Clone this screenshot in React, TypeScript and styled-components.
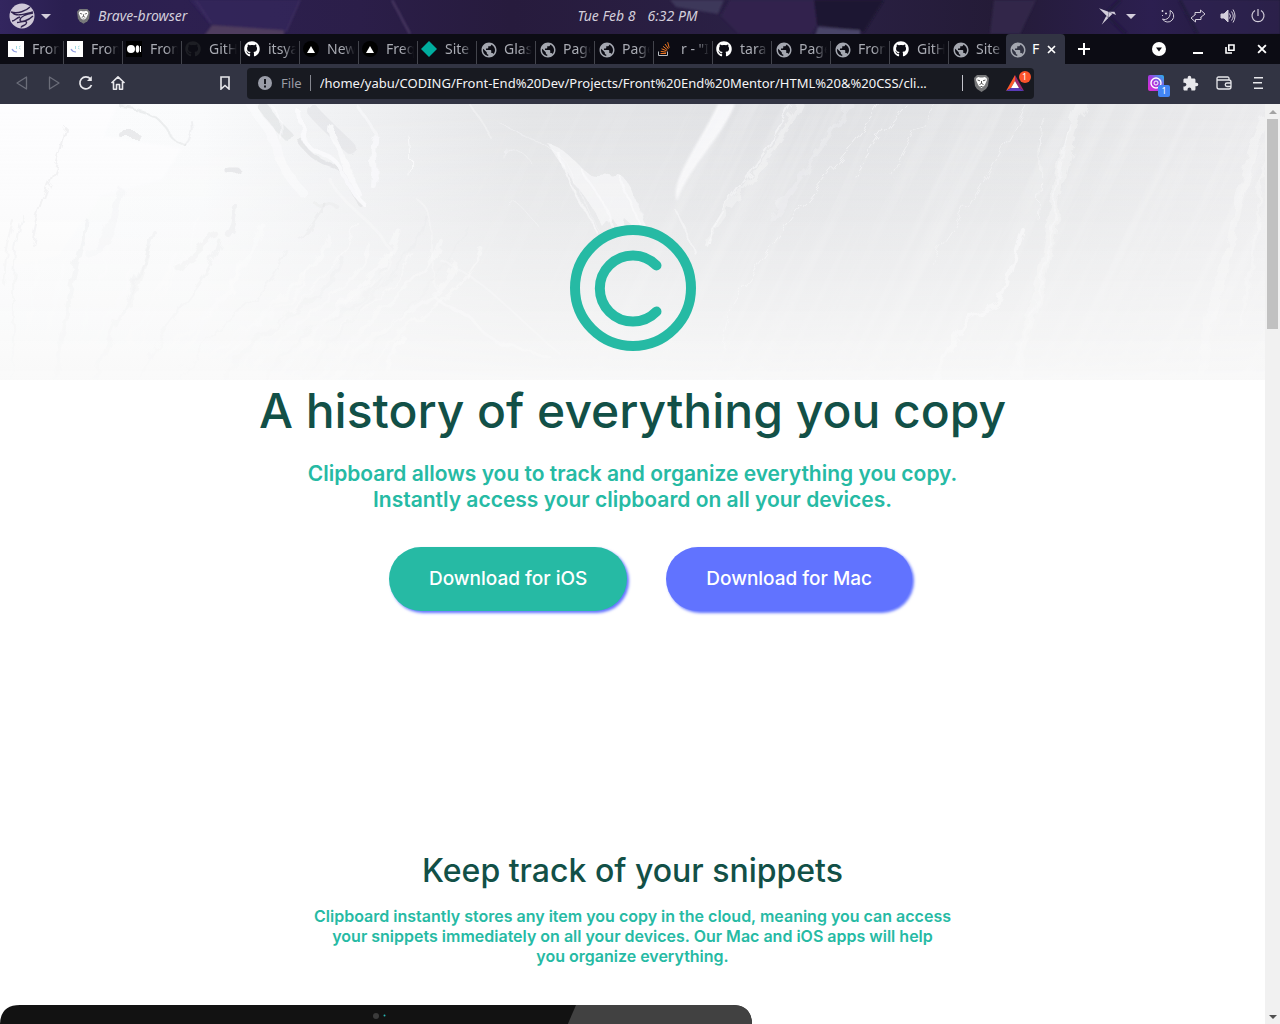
import React from "react";
import styled, { createGlobalStyle, css } from "styled-components";
import { FaGithub } from "react-icons/fa";
import { SiSnapcraft } from "react-icons/si";
import { MdPublic, MdExtension } from "react-icons/md";

const color = {
  panel: "#261d42",
  strip: "#0c0c14",
  toolbar: "#323443",
  field: "#181a21",
  tabText: "#a9abb3",
  light: "#e8e8ec",
  teal: "#26baa4",
  darkTeal: "#125047",
  blue: "#6173ff",
};

const GlobalStyle = createGlobalStyle`
  * { box-sizing: border-box; }
  body { margin: 0; background: #fff; }
  button, input { font: inherit; color: inherit; border: 0; background: none; padding: 0; margin: 0; }
  h1, h2, p { margin: 0; }
  svg { display: block; flex: none; }
`;

const Screen = styled.div`
  display: flex;
  flex-direction: column;
  height: 100vh;
  overflow: hidden;
  font-family: "Noto Sans", sans-serif;
  font-size: 14px;
`;

/* ---------- Desktop panel ---------- */

const Panel = styled.header`
  position: relative;
  display: grid;
  grid-template-columns: 1fr auto 1fr;
  align-items: center;
  flex: none;
  height: 34px;
  padding: 0 14px 2px 9px;
  background: ${color.panel};
  color: #d3cedb;
  font-style: italic;
  line-height: 20px;
`;

const PanelArt = styled.svg`
  position: absolute;
  inset: 0;
  width: 100%;
  height: 100%;
`;

const PanelGroup = styled.div<{ $end?: boolean }>`
  position: relative;
  display: flex;
  align-items: center;
  justify-content: ${(p) => (p.$end ? "flex-end" : "flex-start")};
  gap: ${(p) => (p.$end ? "14px" : "6px")};
`;

const PanelButton = styled.button`
  display: flex;
  align-items: center;
  gap: 6px;
  font-style: italic;
`;

const AppButton = styled(PanelButton)`
  margin-left: 20px;
  gap: 8px;
`;

const TrayMenu = styled(PanelButton)`
  gap: 10px;
  margin-right: 10px;
`;

const Clock = styled.time`
  position: relative;
  display: flex;
  gap: 12px;
`;

/* ---------- Tab strip ---------- */

const TabStrip = styled.nav`
  display: flex;
  flex: none;
  height: 30px;
  padding-left: 5px;
  background: ${color.strip};
  color: ${color.tabText};
`;

const Tab = styled.button<{ $active?: boolean }>`
  position: relative;
  display: flex;
  align-items: center;
  flex: 0 0 59px;
  gap: 8px;
  padding-left: 3px;
  ${(p) =>
    p.$active
      ? css`
          gap: 7px;
          margin-left: -2px;
          border-radius: 4px 4px 0 0;
          background: ${color.toolbar};
          color: #fff;
        `
      : css`
          &::after {
            content: "";
            position: absolute;
            right: 0;
            bottom: 0;
            width: 1px;
            height: 23px;
            background: #43444c;
          }
        `}
`;

const TabTitle = styled.span<{ $fade?: boolean }>`
  width: ${(p) => (p.$fade ? "28px" : "8px")};
  overflow: hidden;
  text-align: left;
  white-space: pre;
  line-height: 20px;
  ${(p) => p.$fade && "mask-image: linear-gradient(90deg, #000 56%, transparent 100%);"}
`;

const Favicon = styled.span<{ $bg?: string; $round?: boolean }>`
  display: grid;
  place-items: center;
  flex: none;
  width: 16px;
  height: 16px;
  border-radius: ${(p) => (p.$round ? "50%" : "0")};
  background: ${(p) => p.$bg || "transparent"};
`;

const WindowButton = styled.button<{ $width?: number }>`
  display: grid;
  place-items: center;
  width: ${(p) => p.$width || 32}px;
  color: #fff;
`;

const WindowControls = styled.div`
  display: flex;
  margin-left: auto;
  padding-right: 2px;
`;

/* ---------- Toolbar ---------- */

const Toolbar = styled.div`
  display: flex;
  align-items: center;
  flex: none;
  height: 40px;
  padding: 0 5px 2px 6px;
  background: ${color.toolbar};
  color: ${color.light};
`;

const ToolButton = styled.button<{ $dim?: boolean; $wide?: boolean }>`
  position: relative;
  display: grid;
  place-items: center;
  width: ${(p) => (p.$wide ? 34 : 32)}px;
  height: 32px;
  color: ${(p) => (p.$dim ? "#6b6d79" : "inherit")};
`;

const Spacer = styled.div<{ $grow: number }>`
  flex: ${(p) => p.$grow} 1 0;
`;

const AddressBar = styled.div`
  display: flex;
  align-items: center;
  flex: 786 1 0;
  height: 31px;
  margin-left: 6px;
  padding: 0 2px 0 10px;
  border-radius: 4px;
  background: ${color.field};
  font-size: 13px;
`;

const Scheme = styled.label`
  margin-left: 8px;
  padding-right: 8px;
  border-right: 1px solid #85878f;
  color: #9a9ca5;
  line-height: 16px;
`;

const Address = styled.input`
  flex: 1;
  min-width: 0;
  height: 20px;
  margin-left: 9px;
  color: #f4f4f6;
  outline: none;
`;

const Divider = styled.span`
  width: 1px;
  height: 16px;
  margin: 0 11px 0 8px;
  background: #c4c5cc;
`;

const RewardsButton = styled.button`
  position: relative;
  margin-left: 16px;
  padding-right: 8px;
`;

const Badge = styled.span<{ $square?: boolean }>`
  position: absolute;
  display: grid;
  place-items: center;
  width: 12px;
  height: 12px;
  font-size: 9px;
  line-height: 12px;
  color: #fff;
  ${(p) =>
    p.$square
      ? "right: 3px; bottom: 2px; border-radius: 2px; background: #4285f4;"
      : "right: 1px; top: -4px; border-radius: 50%; background: #fb542b;"}
`;

/* ---------- Web page ---------- */

const Viewport = styled.div`
  display: flex;
  flex: 1;
  min-height: 0;
  background: #fff;
`;

const Page = styled.main`
  flex: 1;
  min-width: 0;
  overflow: hidden;
  font-family: Inter, sans-serif;
  font-weight: 600;
  text-align: center;
`;

const Hero = styled.div`
  position: relative;
  display: flex;
  justify-content: center;
  padding: 121px 0 29px;
  background: #f8f8f8;
`;

const HeroArt = styled.svg`
  position: absolute;
  inset: 0;
  width: 100%;
  height: 100%;
`;

const Logo = styled.svg`
  position: relative;
`;

const Intro = styled.section`
  padding: 0 16px;
`;

const Title = styled.h1`
  color: ${color.darkTeal};
  font-size: 48px;
  font-weight: 500;
  line-height: 62px;
`;

const Lead = styled.p`
  margin-top: 19px;
  color: ${color.teal};
  font-size: 21px;
  line-height: 26px;
`;

const Actions = styled.div`
  display: flex;
  justify-content: center;
  gap: 39px;
  margin-top: 34px;
  padding-left: 36px;
`;

const Download = styled.a<{ $fill: string }>`
  padding: 0 40px;
  border-radius: 32px;
  background: ${(p) => p.$fill};
  box-shadow: 2px 2px 3px ${color.blue};
  color: #fff;
  font-size: 19px;
  font-weight: 500;
  line-height: 64px;
  text-decoration: none;
`;

const Snippets = styled.section`
  margin-top: 240px;
`;

const Subtitle = styled.h2`
  color: ${color.darkTeal};
  font-size: 32px;
  font-weight: 500;
  line-height: 40px;
`;

const Copy = styled.p`
  margin-top: 15px;
  color: ${color.teal};
  font-size: 16px;
  line-height: 20px;
`;

const Computer = styled.svg`
  margin-top: 39px;
`;

const Scrollbar = styled.div`
  display: flex;
  flex-direction: column;
  align-items: center;
  flex: 0 0 15px;
  background: #f1f1f1;
`;

const ScrollArrow = styled.span<{ $down?: boolean }>`
  width: 0;
  margin: ${(p) => (p.$down ? "auto 0 5px" : "6px 0 5px")};
  border: 4px solid transparent;
  ${(p) =>
    p.$down
      ? "border-top-color: #505050; border-bottom: 0;"
      : "border-bottom-color: #a3a3a3; border-top: 0;"}
`;

const ScrollThumb = styled.span`
  width: 11px;
  height: 210px;
  background: #c1c1c1;
`;

/* ---------- Small drawings ---------- */

const Caret = () => (
  <svg width="10" height="5" viewBox="0 0 10 5" fill="currentColor">
    <path d="M0 0h10L5 5z" />
  </svg>
);

const ZorinMark = () => (
  <svg width="26" height="26" viewBox="0 0 26 26">
    <circle cx="13" cy="13" r="12.500" fill="#cfc9d8" />
    <path
      d="M2 9C9 11 17 8 21 4M3.500 9.500C7 14 16 11 24 9M24 10C17 11 11 14 11 17s8 1 13-4M8 19.500C13 19 18 17 17.500 20S13 22 12 24.500M3 18c3 0 4-3 8-4"
      fill="none"
      stroke="#30234f"
      strokeWidth="1.400"
    />
  </svg>
);

const BraveLion = ({ size = 17 }: { size?: number }) => (
  <svg width={size - 2} height={size + 1} viewBox="0 0 15 18">
    <path d="M3 1h9l3 3-1 8-2 3-4.500 3L3 15l-2-3-1-8z" fill="#77787a" />
    <path
      d="M2.500 4l2-1 1.500.5h3l1.500-.5 2 1 .5 2-1.500 3.500-1 2L7.500 14 4.500 11.500l-1-2L2 6z"
      fill="#fff"
    />
    <path d="M3.500 6l2.500.8M11.500 6L9 6.800M7.500 7v2.500M5.500 10.500l2-1 2 1M6.500 12.500h2" stroke="#555" fill="none" />
  </svg>
);

const Globe = () => (
  <Favicon>
    <MdPublic size={18} color="#a4a7b0" />
  </Favicon>
);

const MentorIcon = () => (
  <Favicon $bg="#fff">
    <svg width="16" height="16" viewBox="0 0 16 16" fill="none">
      <path d="M4 8c1 2 2.500 3 5 3" stroke="#8e9be0" strokeWidth="1.200" />
      <path d="M8.500 5v3M11 6l1.500-1M11 7l1.500 1" stroke="#a5dbe4" />
    </svg>
  </Favicon>
);

const MediumIcon = () => (
  <Favicon $bg="#000">
    <svg width="16" height="16" viewBox="0 0 16 16" fill="#fff">
      <circle cx="5" cy="8" r="4" />
      <ellipse cx="11.500" cy="8" rx="1.800" ry="3.800" />
      <rect x="14" y="5" width="1" height="6" />
    </svg>
  </Favicon>
);

const TriangleIcon = () => (
  <Favicon $bg="#000" $round>
    <svg width="8" height="7" viewBox="0 0 8 7" fill="#fff">
      <path d="M4 0l4 7H0z" />
    </svg>
  </Favicon>
);

const DiamondIcon = () => (
  <svg width="16" height="16" viewBox="0 0 16 16" fill="#00ad9f">
    <path d="M8 0l8 8-8 8-8-8z" />
  </svg>
);

const StackIcon = () => (
  <svg width="16" height="16" viewBox="0 0 16 16" fill="none">
    <path d="M1.500 10.500v4h9v-4" stroke="#b9bcc1" />
    <path d="M3.500 12.500h5.500M3.700 10.300l5.500.9M4.500 7.800l5.200 2M6 5.300l4.400 3.600M8 3l3.400 4.800M10.700 1.200l1.500 5.600" stroke="#ee7622" />
  </svg>
);

const GitHubMark = ({ dim }: { dim?: boolean }) => <FaGithub size={16} color={dim ? "#1d1e24" : "#fff"} />;

const CloseMark = ({ size = 9 }: { size?: number }) => (
  <svg width={size} height={size} viewBox="0 0 9 9" stroke="#fff" strokeWidth="1.700">
    <path d="M1 1l7 7M8 1L1 8" />
  </svg>
);

const tabs: { title: string; icon: React.ReactNode }[] = [
  { title: "Fron", icon: <MentorIcon /> },
  { title: "Fron", icon: <MentorIcon /> },
  { title: "Fron", icon: <MediumIcon /> },
  { title: "GitH", icon: <GitHubMark dim /> },
  { title: "itsya", icon: <GitHubMark /> },
  { title: "New", icon: <TriangleIcon /> },
  { title: "Freq", icon: <TriangleIcon /> },
  { title: "Site", icon: <DiamondIcon /> },
  { title: "Glas", icon: <Globe /> },
  { title: "Page", icon: <Globe /> },
  { title: "Page", icon: <Globe /> },
  { title: 'r - "I', icon: <StackIcon /> },
  { title: "tara", icon: <GitHubMark /> },
  { title: "Page", icon: <Globe /> },
  { title: "Fron", icon: <Globe /> },
  { title: "GitH", icon: <GitHubMark /> },
  { title: "Site", icon: <Globe /> },
];

const Wallpaper = () => (
  <PanelArt viewBox="0 0 1280 34" preserveAspectRatio="none" aria-hidden="true">
    <defs>
      <linearGradient id="wall" x1="0" x2="1">
        <stop offset="0" stopColor="#33265f" />
        <stop offset="0.05" stopColor="#2a1f50" />
        <stop offset="0.14" stopColor="#2d2050" />
        <stop offset="0.28" stopColor="#2b1e49" />
        <stop offset="0.4" stopColor="#271b3d" />
        <stop offset="0.62" stopColor="#2b2146" />
        <stop offset="0.78" stopColor="#241b37" />
        <stop offset="0.9" stopColor="#2c1f50" />
        <stop offset="1" stopColor="#211a36" />
      </linearGradient>
      <filter id="haze">
        <feGaussianBlur stdDeviation="1" />
      </filter>
    </defs>
    <rect width="1280" height="34" fill="url(#wall)" />
    <g filter="url(#haze)">
      <path d="M190 0l20 24 76 8 14-32z" fill="#382764" opacity=".5" />
      <path d="M204 36l8-11 72 5v6z" fill="#4f3c5e" />
      <path d="M196 0l15 23M286 32l14-32" stroke="#463669" fill="none" />
      <path d="M392 0l18 34" stroke="#4b3a64" strokeWidth="2" />
      <path d="M670 0h54l-6 14-42-7z" fill="#3d375a" />
      <path d="M730 0h84l7 18-10 16h-72l-18-18z" fill="#30234d" />
      <path d="M814 0h70l-20 32-47-7z" fill="#1e1930" />
      <path d="M815 36l3-9 42 3v6z" fill="#494568" />
      <path d="M994 0h42l-16 34h-30z" fill="#332849" />
      <path d="M1180 0l18 34h82V0z" fill="#302153" opacity=".7" />
      <path d="M1120 0l-14 14 20 20M1180 0l18 34" stroke="#221a3e" strokeWidth="3" fill="none" />
    </g>
  </PanelArt>
);

/* Brush marks of the paint texture: [path, width, opacity]. */
const whiteMarks: [string, number, number][] = [
  ["M800 0C785 35 740 85 707 135", 5, 0.35],
  ["M792 0C770 45 735 80 705 140", 2, 0.5],
  ["M880 0C860 38 820 72 765 152S730 220 720 240", 1, 0.6],
  ["M850 0C830 30 795 80 772 115", 5, 0.22],
  ["M905 0C888 20 870 45 855 72", 1, 0.6],
  ["M935 0C915 30 905 45 893 72", 1, 0.5],
  ["M1027 0C1005 42 985 75 970 100S945 140 930 160", 1, 0.5],
  ["M1082 0C1060 55 1055 110 1045 160S1025 220 1015 276", 9, 0.35],
  ["M1070 20C1060 60 1056 110 1046 160S1025 220 1018 260", 2, 0.4],
  ["M1044 14C1038 18 1042 70 1037 115", 1, 0.5],
  ["M1022 125C1014 148 1008 185 1000 198S975 200 960 225S942 256 936 276", 4, 0.6],
  ["M1265 18C1245 60 1238 115 1225 160S1210 220 1200 276", 9, 0.35],
  ["M1265 60C1255 100 1258 160 1240 220", 3, 0.3],
  ["M675 106C680 115 690 132 695 150", 2, 0.5],
  ["M500 20C530 34 545 40 560 52S580 100 600 128", 1, 0.4],
  ["M505 55l1-12c9 2 21 6 27 18", 1, 0.4],
  ["M506 98C512 90 524 105 538 122", 1, 0.4],
  ["M299 8C301 25 302 43 318 48S340 60 347 76 357 93 365 101", 4, 0.9],
  ["M333 24C330 36 340 42 343 52S350 75 358 88", 5, 0.8],
  ["M376 34C370 50 377 62 374 82", 6, 0.7],
  ["M410 33C412 48 412 62 411 74", 1, 0.8],
  ["M250 0C262 18 270 24 274 38S284 68 302 88", 9, 0.6],
  ["M270 0C280 10 282 18 280 34", 2, 0.6],
  ["M330 75C340 100 372 115 386 140S374 180 340 202", 3, 0.35],
  ["M418 96C430 105 432 120 432 143S434 165 436 185", 2, 0.35],
  ["M434 192C450 210 464 202 478 222S510 240 550 254", 3, 0.5],
  ["M440 156C480 170 515 213 560 250", 2, 0.4],
  ["M404 234C394 238 394 252 390 268", 4, 0.8],
  ["M470 0C478 14 486 20 492 35", 2, 0.35],
  ["M355 0C366 12 370 20 376 30", 3, 0.5],
];

const greyMarks: [string, number, number][] = [
  ["M264 4C270 16 282 26 290 34", 10, 0.16],
  ["M300 36C306 50 318 56 334 62S345 80 360 100", 4, 0.2],
  ["M312 6C326 22 336 30 350 44", 12, 0.12],
  ["M122 31h14", 6, 0.2],
  ["M120 2C150 4 162 16 168 28S180 36 186 42", 2, 0.16],
  ["M192 18C194 28 192 36 186 42", 2, 0.12],
  ["M228 66l8 0", 7, 0.22],
  ["M316 100C324 104 330 96 338 104", 4, 0.08],
  ["M66 24C58 70 40 90 32 140", 2, 0.14],
  ["M14 118C4 150 6 160 4 180", 2, 0.1],
  ["M236 104C234 120 232 124 228 130", 6, 0.12],
  ["M215 130C205 142 192 150 180 166", 6, 0.1],
  ["M148 145C142 170 136 180 130 200", 5, 0.1],
  ["M324 100C318 112 306 128 300 134", 3, 0.1],
  ["M120 88C110 110 118 130 90 150", 9, 0.05],
];

const fineMarks = Array.from({ length: 26 }, (_, i) => {
  const x = 12 + i * 14;
  const lean = Math.min(120, 10 + i * 8);
  const top = 110 + ((i * 23) % 60);
  return `M${x + lean} ${top}C${x + lean - 14} ${top + 50} ${x + lean / 3} 210 ${x} 276`;
});

const PaintTexture = () => (
  <HeroArt viewBox="0 0 1265 276" preserveAspectRatio="none" aria-hidden="true">
    <defs>
      <linearGradient id="across" x1="0" x2="1">
        <stop offset="0" stopColor="#fcfdfe" />
        <stop offset="0.16" stopColor="#fafbfc" />
        <stop offset="0.26" stopColor="#f1f2f4" />
        <stop offset="0.42" stopColor="#e4e5e7" />
        <stop offset="0.62" stopColor="#e0e1e4" />
        <stop offset="0.82" stopColor="#e4e5e7" />
        <stop offset="1" stopColor="#ebebed" />
      </linearGradient>
      <linearGradient id="down" x1="0" x2="0" y1="0" y2="1">
        <stop offset="0" stopColor="#f9f9f9" stopOpacity="0" />
        <stop offset="0.35" stopColor="#f9f9f9" stopOpacity="0.26" />
        <stop offset="1" stopColor="#f9f9f9" stopOpacity="0.94" />
      </linearGradient>
      <linearGradient id="reveal" gradientUnits="userSpaceOnUse" x1="380" x2="760" y1="0" y2="0">
        <stop offset="0" stopColor="#000" />
        <stop offset="1" stopColor="#fff" />
      </linearGradient>
      <mask id="right" maskUnits="userSpaceOnUse" x="0" y="0" width="1265" height="276">
        <rect width="1265" height="276" fill="url(#reveal)" />
      </mask>
      <filter id="soft" x="-10%" y="-10%" width="120%" height="120%">
        <feGaussianBlur stdDeviation="1.300" />
      </filter>
      <filter id="rough" x="-10%" y="-10%" width="120%" height="120%">
        <feTurbulence type="fractalNoise" baseFrequency="0.06" numOctaves="3" seed="4" result="n" />
        <feDisplacementMap in="SourceGraphic" in2="n" scale="12" />
        <feGaussianBlur stdDeviation="0.600" />
      </filter>
      <filter id="grain" x="0" y="0" width="100%" height="100%">
        <feTurbulence type="fractalNoise" baseFrequency="0.003 0.07" numOctaves="4" seed="8" />
        <feColorMatrix values="0 0 0 0 1  0 0 0 0 1  0 0 0 0 1  3 0 0 0 -1.300" />
      </filter>
    </defs>
    <rect width="1265" height="276" fill="url(#across)" />
    <g mask="url(#right)">
      <g transform="rotate(-64 632 138)">
        <rect x="-100" y="-600" width="1465" height="1476" filter="url(#grain)" opacity=".18" />
      </g>
    </g>
    <path d="M0 0h118l-14 32 34 6 44 6-20 32-62 16-40 60-44 10H0z" fill="#fdfdfe" filter="url(#soft)" />
    <g fill="none" strokeLinecap="round" filter="url(#rough)">
      {greyMarks.map(([d, w, o]) => (
        <path key={d} d={d} stroke="#a3a6aa" strokeWidth={w} opacity={o} />
      ))}
      {fineMarks.map((d, i) => (
        <path key={d} d={d} stroke={i % 3 ? "#fff" : "#e2e4e5"} strokeWidth={2 + (i % 4)} opacity=".4" />
      ))}
    </g>
    <g fill="none" strokeLinecap="round" stroke="#fbfbfd" filter="url(#rough)">
      {whiteMarks.map(([d, w, o]) => (
        <path key={d} d={d} strokeWidth={w} opacity={o} />
      ))}
      <path
        d="M550 42c14 2 24 14 34 24s18 4 26 6 8-4 16 4 12 26 20 46l-8 4-12-10-4 12-10-14-8 10C590 100 575 80 550 42z"
        fill="#fbfbfd"
        opacity=".6"
        stroke="none"
      />
      <path d="M560 50C572 90 586 104 596 128M580 64C596 88 606 100 612 122M622 74C626 92 634 104 640 122" strokeWidth="2" opacity=".6" />
    </g>
    <path
      d="M718 0h17C724 30 690 62 677 97c-8-20 23-58 41-97z"
      fill="#fafafc"
      opacity=".85"
      filter="url(#soft)"
    />
    <rect width="1265" height="276" fill="url(#down)" />
  </HeroArt>
);

export default function App() {
  return (
    <Screen>
      <GlobalStyle />
      <Panel>
        <Wallpaper />
        <PanelGroup>
          <PanelButton aria-label="Applications">
            <ZorinMark />
            <Caret />
          </PanelButton>
          <AppButton>
            <BraveLion size={15} />
            Brave-browser
          </AppButton>
        </PanelGroup>
        <Clock>
          <span>Tue Feb 8</span>
          <span>6:32 PM</span>
        </Clock>
        <PanelGroup $end>
          <TrayMenu aria-label="Tray">
            <SiSnapcraft size={17} />
            <Caret />
          </TrayMenu>
          <PanelButton aria-label="Night light">
            <svg width="16" height="16" viewBox="0 0 16 16" fill="none" stroke="currentColor">
              <path d="M10 2.500a6 6 0 1 1-7.500 8.500c4 2 9-2 7.500-8.500z" />
              <path d="M2.500 2v2M1.500 3h2M6 4.500v2M5 5.500h2M2.500 7v1" />
            </svg>
          </PanelButton>
          <PanelButton aria-label="Network">
            <svg width="16" height="16" viewBox="0 0 16 16" fill="none" stroke="currentColor">
              <path d="M5 7V4.500h5.500V2L15 6l-4.500 3.500M11 9v2.500H5.500V14L1 10l4.500-3.500" />
            </svg>
          </PanelButton>
          <PanelButton aria-label="Volume">
            <svg width="16" height="16" viewBox="0 0 16 16" fill="none" stroke="currentColor">
              <path d="M1 6h3l4-4v12l-4-4H1z" fill="currentColor" />
              <path d="M9.500 5.500q2 2.500 0 5M11.500 3.500q3.500 4.500 0 9M13 1.500q4 6.500 0 13" />
            </svg>
          </PanelButton>
          <PanelButton aria-label="Power">
            <svg width="16" height="16" viewBox="0 0 16 16" fill="none" stroke="currentColor" strokeWidth="1.200">
              <path d="M8 1v7M5 2.500a6 6 0 1 0 6 0" />
            </svg>
          </PanelButton>
        </PanelGroup>
      </Panel>

      <TabStrip aria-label="Open tabs">
        {tabs.map((tab, i) => (
          <Tab key={i}>
            {tab.icon}
            <TabTitle $fade>{tab.title}</TabTitle>
          </Tab>
        ))}
        <Tab $active>
          <Globe />
          <TabTitle>F</TabTitle>
          <CloseMark />
        </Tab>
        <WindowButton $width={38} aria-label="New tab">
          <svg width="12" height="12" viewBox="0 0 12 12" stroke="currentColor" strokeWidth="2">
            <path d="M6 0v12M0 6h12" />
          </svg>
        </WindowButton>
        <WindowControls>
          <WindowButton $width={46} aria-label="Search tabs">
            <svg width="14" height="14" viewBox="0 0 14 14">
              <circle cx="7" cy="7" r="7" fill="#fff" />
              <path d="M4 5.500h6l-3 4z" fill="#0c0c14" />
            </svg>
          </WindowButton>
          <WindowButton aria-label="Minimize">
            <svg width="10" height="10" viewBox="0 0 10 10" fill="#fff">
              <path d="M0 8h10v2H0z" />
            </svg>
          </WindowButton>
          <WindowButton aria-label="Restore">
            <svg width="10" height="10" viewBox="0 0 10 10" fill="none" stroke="#fff" strokeWidth="1.600">
              <path d="M3.800 1H9v5.200H3.800zM1 3v6h6" />
            </svg>
          </WindowButton>
          <WindowButton aria-label="Close">
            <CloseMark size={10} />
          </WindowButton>
        </WindowControls>
      </TabStrip>

      <Toolbar>
        <ToolButton $dim aria-label="Back">
          <svg width="12" height="14" viewBox="0 0 12 14" fill="none" stroke="currentColor" strokeWidth="1.300" strokeLinejoin="round">
            <path d="M10.500 1v12L1 7z" />
          </svg>
        </ToolButton>
        <ToolButton $dim aria-label="Forward">
          <svg width="12" height="14" viewBox="0 0 12 14" fill="none" stroke="currentColor" strokeWidth="1.300" strokeLinejoin="round">
            <path d="M1.500 1v12L11 7z" />
          </svg>
        </ToolButton>
        <ToolButton aria-label="Reload">
          <svg width="16" height="16" viewBox="0 0 16 16" fill="none" stroke="currentColor" strokeWidth="1.700">
            <path d="M12.500 4A6 6 0 1 0 13.500 10" />
            <path d="M13.800 1v5H9z" fill="currentColor" stroke="none" />
          </svg>
        </ToolButton>
        <ToolButton aria-label="Home">
          <svg width="16" height="16" viewBox="0 0 16 16" fill="none" stroke="currentColor" strokeWidth="1.600" strokeLinejoin="round">
            <path d="M1.500 8L8 1.800 14.500 8M3.500 7v7.200h3V9.500h3v4.700h3V7" />
          </svg>
        </ToolButton>
        <Spacer $grow={76} />
        <ToolButton aria-label="Bookmark">
          <svg width="10" height="14" viewBox="0 0 10 14" fill="none" stroke="currentColor" strokeWidth="1.600">
            <path d="M1 1h8v12L5 9.500 1 13z" />
          </svg>
        </ToolButton>
        <AddressBar>
          <svg width="16" height="16" viewBox="0 0 16 16">
            <circle cx="8" cy="8" r="7" fill="#9a9da8" />
            <path d="M8 4v5M8 10.500v2" stroke={color.field} strokeWidth="2" />
          </svg>
          <Scheme htmlFor="address">File</Scheme>
          <Address
            id="address"
            readOnly
            value="/home/yabu/CODING/Front-End%20Dev/Projects/Front%20End%20Mentor/HTML%20&%20CSS/cli..."
          />
          <Divider />
          <WindowButton $width={16} aria-label="Shields">
            <BraveLion size={17} />
          </WindowButton>
          <RewardsButton aria-label="Rewards, 1 new">
            <svg width="18" height="16" viewBox="0 0 18 16">
              <path d="M9 0L0 16l5-3 4-7z" fill="#ff5a2a" />
              <path d="M9 0l9 16-5-3-4-7z" fill="#9e2a70" />
              <path d="M0 16h18l-5-3H5z" fill="#5a3bb8" />
              <path d="M9 6l4 7H5z" fill="#fff" />
            </svg>
            <Badge>1</Badge>
          </RewardsButton>
        </AddressBar>
        <Spacer $grow={107} />
        <ToolButton $wide aria-label="Extension, 1 new">
          <svg width="16" height="16" viewBox="0 0 16 16">
            <defs>
              <linearGradient id="ext" x1="0" y1="1" x2="1" y2="0">
                <stop offset="0" stopColor="#e02bd0" />
                <stop offset="0.5" stopColor="#a53be0" />
                <stop offset="1" stopColor="#20b8ee" />
              </linearGradient>
            </defs>
            <rect width="16" height="16" rx="2" fill="url(#ext)" />
            <circle cx="8" cy="8" r="5" fill="none" stroke="#fff" strokeWidth="1.400" />
            <circle cx="8" cy="8" r="2" fill="none" stroke="#fff" />
          </svg>
          <Badge $square>1</Badge>
        </ToolButton>
        <ToolButton $wide aria-label="Extensions">
          <MdExtension size={17} />
        </ToolButton>
        <ToolButton $wide aria-label="Wallet">
          <svg width="16" height="14" viewBox="0 0 16 14" fill="none" stroke="currentColor" strokeWidth="1.300">
            <path d="M13 4V2.500Q13 1 11.500 1H2.500Q1 1 1 2.500V11q0 2 2 2h10q2 0 2-2V6q0-2-2-2H1.500M15 7h-4a1.700 1.700 0 0 0 0 3.500h4" />
          </svg>
        </ToolButton>
        <ToolButton $wide aria-label="Menu">
          <svg width="10" height="12" viewBox="0 0 10 12" fill="currentColor">
            <path d="M1 0h9v1.500H1zM0 5h9v1.500H0zM1 10.500h9V12H1z" />
          </svg>
        </ToolButton>
      </Toolbar>

      <Viewport>
        <Page>
          <Hero>
            <PaintTexture />
            <Logo width="126" height="126" viewBox="0 0 126 126" fill="none" stroke={color.teal} strokeWidth="10" strokeLinecap="round" role="img" aria-label="Clipboard">
              <circle cx="63" cy="63" r="58" />
              <path d="M86.500 40.500A33 33 0 1 0 86.500 86.500" />
            </Logo>
          </Hero>
          <Intro>
            <Title>A history of everything you copy</Title>
            <Lead>
              Clipboard allows you to track and organize everything you copy.
              <br />
              Instantly access your clipboard on all your devices.
            </Lead>
            <Actions>
              <Download href="#ios" $fill={color.teal}>
                Download for iOS
              </Download>
              <Download href="#mac" $fill={color.blue}>
                Download for Mac
              </Download>
            </Actions>
          </Intro>
          <Snippets>
            <Subtitle>Keep track of your snippets</Subtitle>
            <Copy>
              Clipboard instantly stores any item you copy in the cloud, meaning you can access
              <br />
              your snippets immediately on all your devices. Our Mac and iOS apps will help
              <br />
              you organize everything.
            </Copy>
            <Computer width="752" height="430" viewBox="0 0 752 430" role="img" aria-label="Computer">
              <path d="M0 430V20Q0 0 20 0h712q20 0 20 20v410z" fill="#121212" />
              <path d="M576 0h156q20 0 20 20v410H392z" fill="#414141" />
              <circle cx="376" cy="11" r="3" fill="#3b3b3b" />
              <circle cx="384.500" cy="10.500" r="1" fill="#27b6b4" />
            </Computer>
          </Snippets>
        </Page>
        <Scrollbar aria-hidden="true">
          <ScrollArrow />
          <ScrollThumb />
          <ScrollArrow $down />
        </Scrollbar>
      </Viewport>
    </Screen>
  );
}
